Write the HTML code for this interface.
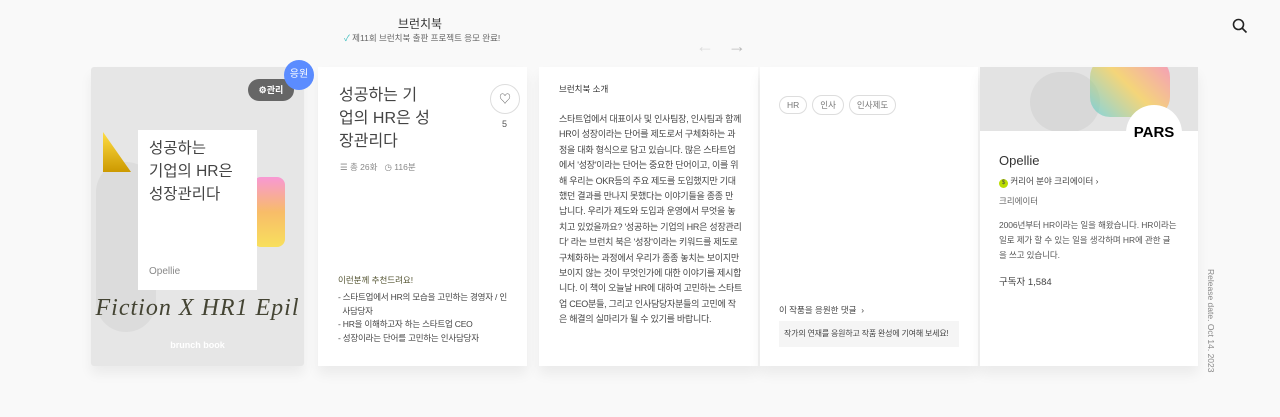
<!DOCTYPE html>
<html><head><meta charset="utf-8"><style>
*{margin:0;padding:0;box-sizing:border-box}
body{width:1280px;height:417px;background:#f9f9f9;font-family:"Liberation Sans","Noto Sans CJK KR",sans-serif;color:#333;position:relative;overflow:hidden}
.a{position:absolute}
.nw{white-space:nowrap}
.pg{position:absolute;top:67px;height:299px;background:#fff;box-shadow:0 8px 12px rgba(0,0,0,0.06)}
.t{font-size:9px;line-height:15.4px;color:#444;white-space:nowrap;letter-spacing:-0.25px}
.tag{display:inline-block;border:1px solid #ddd;border-radius:10px;font-size:8.5px;color:#777;padding:3px 7px;margin-right:5px}
</style></head><body>
<div class="a" style="left:0;width:840px;top:15px;text-align:center;font-size:12px;color:#333">브런치북</div>
<div class="a nw" style="left:344px;top:32px;font-size:8.5px;color:#666"><span style="color:#3bb;">✓</span> 제11회 브런치북 출판 프로젝트 응모 완료!</div>
<div class="a" style="left:696px;top:36px;font-size:18px;color:#ddd">←</div>
<div class="a" style="left:728px;top:36px;font-size:18px;color:#bbb">→</div>
<svg class="a" style="left:1232px;top:18px" width="16" height="16"><circle cx="6.5" cy="6.5" r="5" fill="none" stroke="#222" stroke-width="1.6"/><path d="M10 10L14.5 14.5" stroke="#222" stroke-width="1.6"/></svg>

<div class="pg" style="left:91px;width:213px;background:#e6e6e6;border-radius:3px;overflow:hidden">
 <div class="a" style="left:5px;top:95px;width:60px;height:170px;background:#dcdcdc;border-radius:30px"></div>
 <div class="a" style="left:12px;top:65px;width:28px;height:40px;background:linear-gradient(#fd4,#c90);clip-path:polygon(0 0,100% 100%,0 100%)"></div>
 <div class="a" style="left:162px;top:110px;width:32px;height:70px;background:linear-gradient(#f7c,#fa3,#fd2);opacity:.7;border-radius:8px"></div>
 <div class="a" style="left:47px;top:63px;width:119px;height:160px;background:#fff"></div>
 <div class="a nw" style="left:58px;top:70px;font-size:15.5px;line-height:23px;color:#444">성공하는<br>기업의 HR은<br>성장관리다</div>
 <div class="a" style="left:58px;top:199px;font-size:10px;color:#888">Opellie</div>
 <div class="a nw" style="left:-4px;top:228px;width:221px;text-align:center;font-family:'Liberation Serif',serif;font-style:italic;font-size:24px;color:#443;letter-spacing:1px">Fiction X HR1 Epil</div>
 <div class="a" style="left:0;top:273px;width:213px;text-align:center;font-size:9px;font-weight:bold;color:#fff">brunch book</div>
 <div class="a" style="left:157px;top:12px;width:46px;height:22px;border-radius:11px;background:#666;color:#fff;font-size:9px;font-weight:bold;line-height:22px;text-align:center">⚙관리</div>
</div>
<div class="a" style="left:284px;top:60px;width:30px;height:30px;border-radius:50%;background:#5b8cff;color:#fff;font-size:10px;text-align:center;line-height:30px">응원</div>

<div class="pg" style="left:318px;width:209px">
 <div class="a nw" style="left:21px;top:17px;font-size:16px;line-height:23px;color:#444">성공하는 기<br>업의 HR은 성<br>장관리다</div>
 <div class="a nw" style="left:22px;top:94px;font-size:8.5px;color:#888">☰ 총 26화 &nbsp; ◷ 116분</div>
 <div class="a" style="left:172px;top:17px;width:30px;height:30px;border:1px solid #ddd;border-radius:50%;text-align:center;line-height:28px;font-size:12px;color:#666">♡</div>
 <div class="a" style="left:184px;top:52px;font-size:9px;color:#555">5</div>
 <div class="a nw" style="left:20px;top:207px;font-size:8.5px;color:#553">이런분께 추천드려요!</div>
 <div class="a t" style="left:20px;top:224px;font-size:8.5px;line-height:13.5px;letter-spacing:-0.2px">- 스타트업에서 HR의 모습을 고민하는 경영자 / 인<br>&nbsp;&nbsp;사담당자<br>- HR을 이해하고자 하는 스타트업 CEO<br>- 성장이라는 단어를 고민하는 인사담당자</div>
</div>

<div class="pg" style="left:539px;width:219px">
 <div class="a nw" style="left:20px;top:16px;font-size:8.5px;color:#333">브런치북 소개</div>
 <div class="a t" style="left:20px;top:45px">스타트업에서 대표이사 및 인사팀장, 인사팀과 함께<br>HR이 성장이라는 단어를 제도로서 구체화하는 과<br>정을 대화 형식으로 담고 있습니다. 많은 스타트업<br>에서 '성장'이라는 단어는 중요한 단어이고, 이를 위<br>해 우리는 OKR등의 주요 제도를 도입했지만 기대<br>했던 결과를 만나지 못했다는 이야기들을 종종 만<br>납니다. 우리가 제도와 도입과 운영에서 무엇을 놓<br>치고 있었을까요? '성공하는 기업의 HR은 성장관리<br>다' 라는 브런치 북은 '성장'이라는 키워드를 제도로<br>구체화하는 과정에서 우리가 종종 놓치는 보이지만<br>보이지 않는 것이 무엇인가에 대한 이야기를 제시합<br>니다. 이 책이 오늘날 HR에 대하여 고민하는 스타트<br>업 CEO분들, 그리고 인사담당자분들의 고민에 작<br>은 해결의 실마리가 될 수 있기를 바랍니다.</div>
</div>

<div class="pg" style="left:760px;width:218px">
 <div class="a nw" style="left:19px;top:28px"><span class="tag">HR</span><span class="tag">인사</span><span class="tag">인사제도</span></div>
 <div class="a nw" style="left:19px;top:237px;font-size:8.5px;color:#444">이 작품을 응원한 댓글 &nbsp;›</div>
 <div class="a nw" style="left:19px;top:254px;width:180px;height:26px;background:#f5f5f5;font-size:8px;line-height:26px;padding-left:5px;color:#444;letter-spacing:-0.2px">작가의 연재를 응원하고 작품 완성에 기여해 보세요!</div>
</div>

<div class="pg" style="left:980px;width:218px">
 <div class="a" style="left:0;top:0;width:218px;height:64px;background:#e3e3e3;overflow:hidden">
  <div class="a" style="left:50px;top:5px;width:70px;height:60px;background:#d8d8d8;border-radius:30px"></div>
  <div class="a" style="left:110px;top:-10px;width:80px;height:60px;background:linear-gradient(45deg,#4cd,#fc3,#f6a);opacity:.6;border-radius:20px"></div>
 </div>
 <div class="a" style="left:146px;top:38px;width:56px;height:56px;border-radius:50%;background:#fff;text-align:center;font-size:15px;font-weight:bold;line-height:56px;color:#000">PARS</div>
 <div class="a" style="left:19px;top:86px;font-size:13px;color:#333">Opellie</div>
 <div class="a nw" style="left:19px;top:108px;font-size:8.5px;color:#444"><span style="display:inline-block;width:9px;height:9px;border-radius:50%;background:#bd0;font-size:6px;text-align:center;line-height:9px">$</span> 커리어 분야 크리에이터 ›</div>
 <div class="a nw" style="left:19px;top:128px;font-size:8.5px;color:#666">크리에이터</div>
 <div class="a nw" style="left:19px;top:151px;font-size:8.5px;line-height:15px;color:#555;letter-spacing:-0.1px">2006년부터 HR이라는 일을 해왔습니다. HR이라는<br>일로 제가 할 수 있는 일을 생각하며 HR에 관한 글<br>을 쓰고 있습니다.</div>
 <div class="a nw" style="left:19px;top:207px;font-size:9.5px;color:#444">구독자 1,584</div>
</div>
<div class="a" style="transform:rotate(90deg);transform-origin:left top;left:1216px;top:269px;font-size:8.5px;color:#888;white-space:nowrap">Release date. Oct 14. 2023</div>
</body></html>
